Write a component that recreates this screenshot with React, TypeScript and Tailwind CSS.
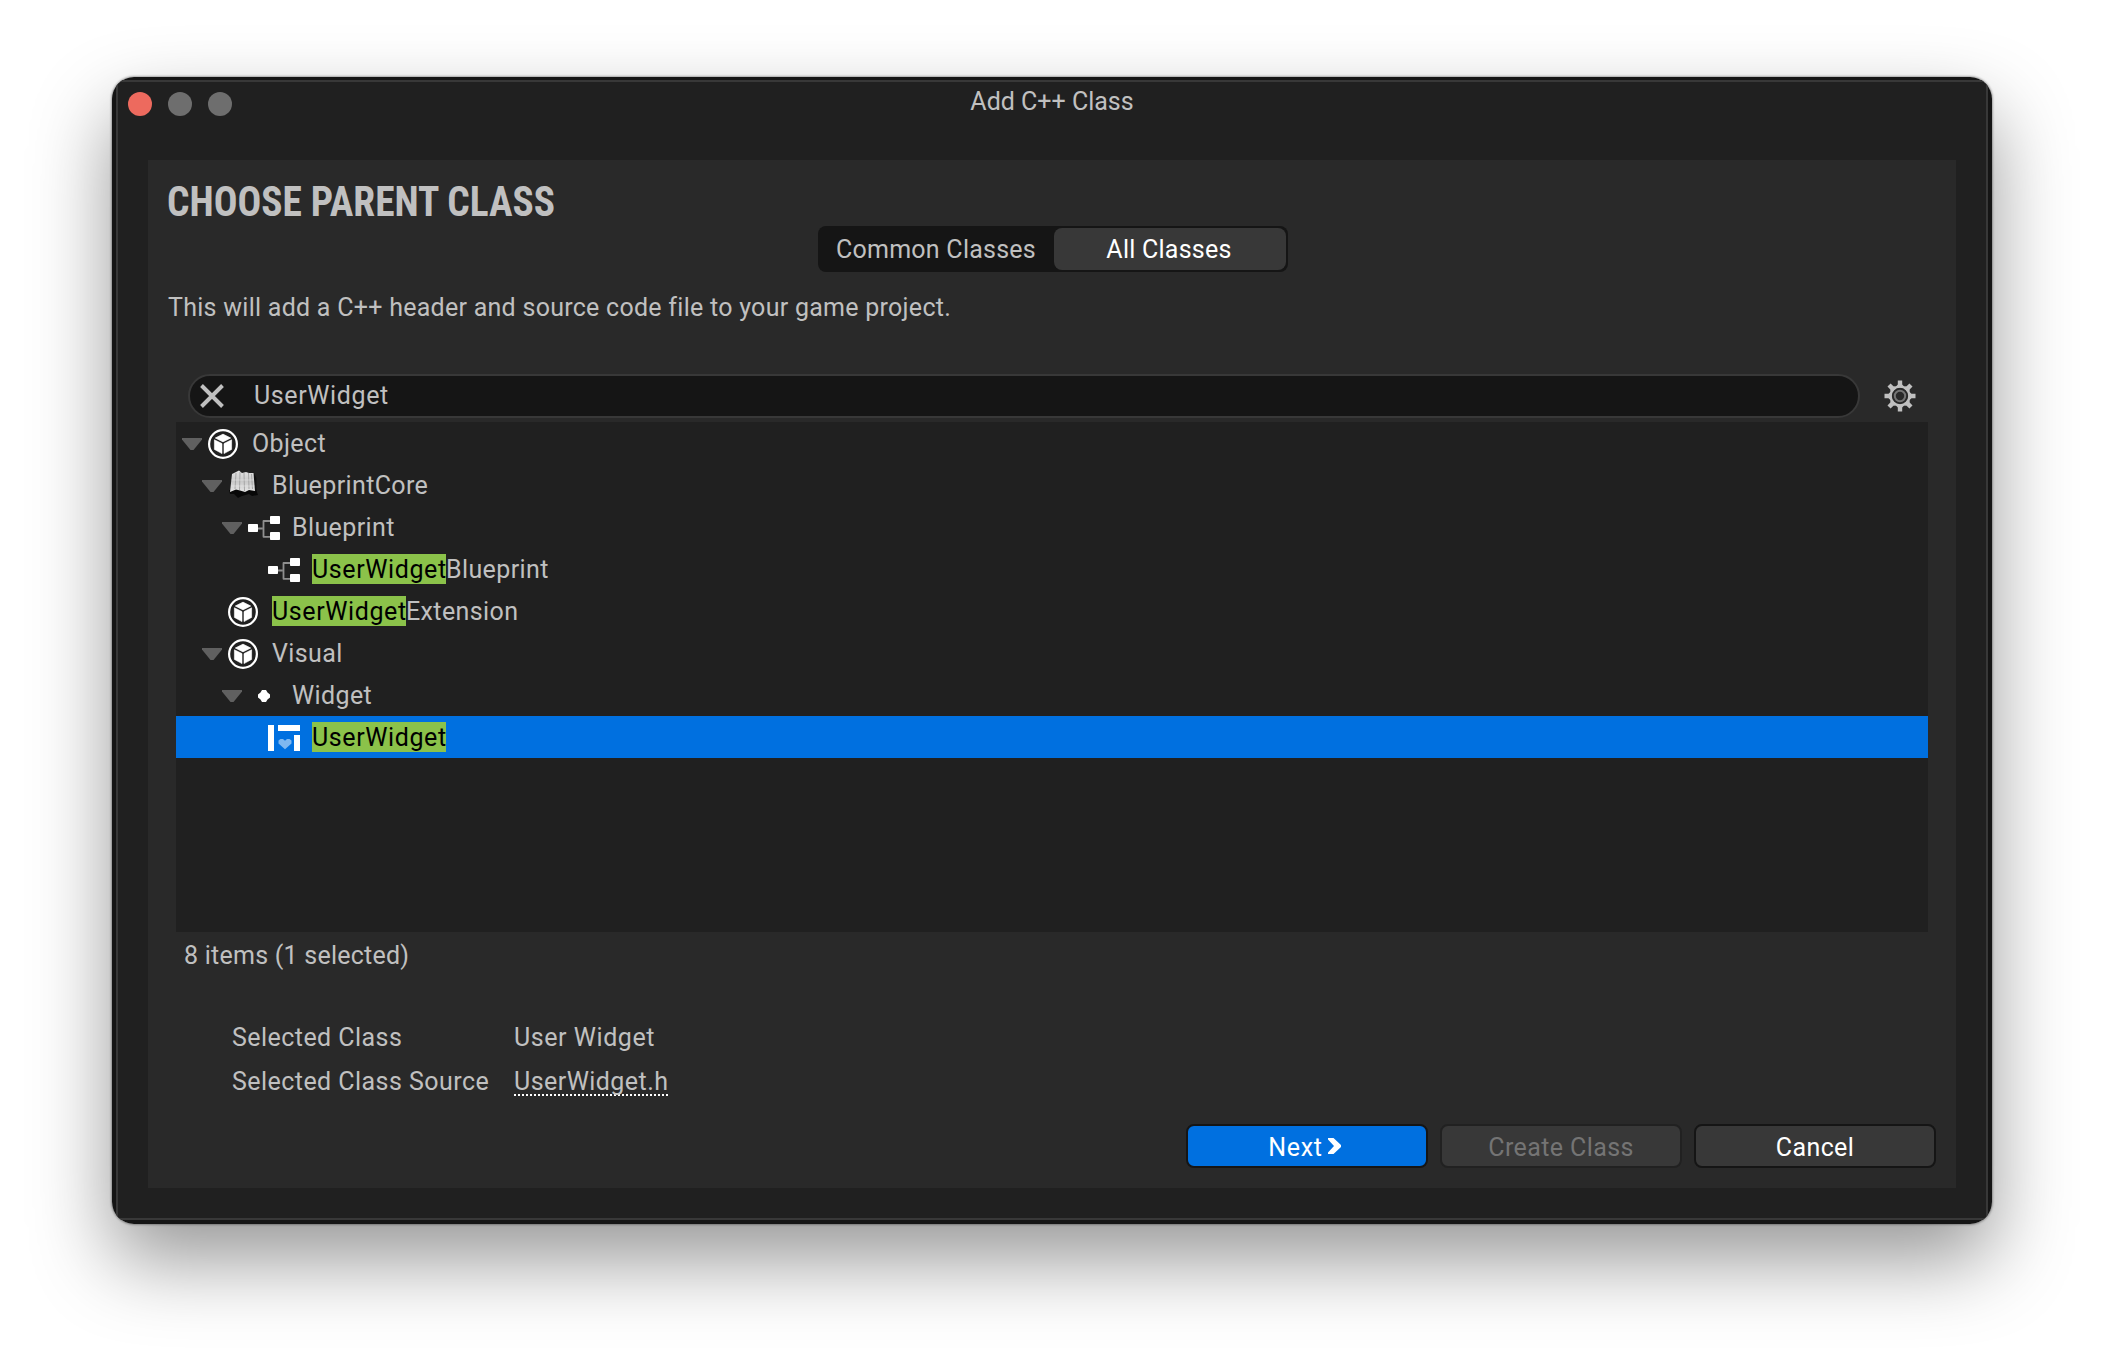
import type { ReactNode } from "react";

function CubeIcon() {
  return (
    <svg width="30" height="30" viewBox="0 0 30 30" fill="none">
      <circle cx="15" cy="15" r="13.9" stroke="#fff" strokeWidth="2.2" />
      <path d="M15 5.2 22.6 9 15 12.8 7.4 9Z" fill="#fff" stroke="#fff" strokeWidth="0.8" strokeLinejoin="round" />
      <path d="M6.4 10.8 14 14.6V24.6L6.4 20.4Z" fill="#fff" stroke="#fff" strokeWidth="0.6" strokeLinejoin="round" />
      <path d="M23.6 10.8 16 14.6V24.6L23.6 20.4Z" fill="#fff" stroke="#fff" strokeWidth="0.6" strokeLinejoin="round" />
    </svg>
  );
}

function CoreIcon() {
  return (
    <svg width="32" height="32" viewBox="0 0 32 32" fill="none">
      <defs>
        <linearGradient id="core" x1="0" y1="0" x2="0" y2="1">
          <stop offset="0" stopColor="#e4e4e4" />
          <stop offset="0.5" stopColor="#c8c8c8" />
          <stop offset="1" stopColor="#e6e6e6" />
        </linearGradient>
      </defs>
      <path d="M1 22 28 21 30 27 24 28 21 26 14 28 10 30 6 26 2 26Z" fill="#080808" />
      <path d="M26 5 28.5 10V23H26Z" fill="#101010" />
      <path d="M4 6 8 4 11 2.500 14 5 18 4 21 5 25.500 5 27 23 21 22 17 24 12 22.500 8 21.500 2 24Z" fill="url(#core)" />
      <path d="M8 5 7 21M12 4 11.500 22M16 5 16.500 23M20.500 5 21 21M23.500 6 24.500 21" stroke="#a2a2a2" strokeWidth="0.9" />
      <path d="M3.500 12H26M3 18H26.500" stroke="#efefef" strokeWidth="0.8" opacity="0.6" />
    </svg>
  );
}

function BlueprintIcon() {
  return (
    <svg width="32" height="24" viewBox="0 0 32 24" fill="none">
      <path d="M10 12.5H14.5M22 5H15.5V20.8H22" stroke="#8f8f8f" strokeWidth="1.8" strokeLinejoin="round" />
      <rect x="0" y="8" width="10" height="8" rx="0.8" fill="#fff" />
      <rect x="22" y="0" width="10" height="8" rx="0.8" fill="#fff" />
      <rect x="22" y="16" width="10" height="8" rx="0.8" fill="#fff" />
    </svg>
  );
}

function DotIcon() {
  return (
    <svg width="32" height="12" viewBox="0 0 32 12">
      <path d="M14 0h4l1.500 2.500L22 4.500v3l-2.500 2L18 12h-4l-1.500-2.500L10 7.500v-3l2.500-2Z" fill="#fff" />
    </svg>
  );
}

function WidgetIcon() {
  return (
    <svg width="32" height="26" viewBox="0 0 32 26">
      <path d="M0 0h6v26H0ZM10 0h22v6H10ZM26 10h6v16h-6Z" fill="#fff" />
      <path d="M17 24.200 10.500 18.500V15.500L12.500 14H15L17 15.800 19 14H21.500L23.500 15.500V18.500Z" fill="#80b8f0" />
    </svg>
  );
}

function GearIcon() {
  return (
    <svg width="32" height="32" viewBox="-16 -16 32 32" fill="none">
      {[0, 45, 90, 135, 180, 225, 270, 315].map((a) => (
        <path key={a} d="M-5 -8.500 -2.200 -11.500V-15.500H2.200V-11.500L5 -8.500Z" fill="#c0c0c0" transform={`rotate(${a})`} />
      ))}
      <circle r="9.200" stroke="#c0c0c0" strokeWidth="2" />
      <circle r="5.200" stroke="#747474" strokeWidth="2" />
    </svg>
  );
}

const indents = ["pl-[6px]", "pl-[26px]", "pl-[46px]", "pl-[66px]"];

type Row = { depth: number; open?: boolean; icon: ReactNode; hit?: string; label: string; selected?: boolean };

const rows: Row[] = [
  { depth: 0, open: true, icon: <CubeIcon />, label: "Object" },
  { depth: 1, open: true, icon: <CoreIcon />, label: "BlueprintCore" },
  { depth: 2, open: true, icon: <BlueprintIcon />, label: "Blueprint" },
  { depth: 3, icon: <BlueprintIcon />, hit: "UserWidget", label: "Blueprint" },
  { depth: 1, icon: <CubeIcon />, hit: "UserWidget", label: "Extension" },
  { depth: 1, open: true, icon: <CubeIcon />, label: "Visual" },
  { depth: 2, open: true, icon: <DotIcon />, label: "Widget" },
  { depth: 3, icon: <WidgetIcon />, hit: "UserWidget", label: "", selected: true },
];

function TreeRow({ row }: { row: Row }) {
  return (
    <div className={`flex h-[42px] items-center ${indents[row.depth]} ${row.selected ? "bg-[#0070e0]" : ""}`}>
      <span className="flex w-[26px] shrink-0 pt-[2px]">
        {row.open && (
          <svg width="20" height="12" viewBox="0 0 20 12">
            <path d="M0 0h20v1.500L11.500 12h-3L0 1.500Z" fill="#606060" />
          </svg>
        )}
      </span>
      <span className={`flex w-[44px] shrink-0 ${row.label === "BlueprintCore" ? "pb-[2px]" : "pt-[1px]"}`}>{row.icon}</span>
      <span className="flex h-[30px] leading-[32px]">
        {row.hit && <mark className="w-[134px] bg-[#8bc24a] tracking-[0.6px] text-black">{row.hit}</mark>}
        <span className="tracking-[0.38px]">{row.label}</span>
      </span>
    </div>
  );
}

const buttonBase = "flex h-[44px] w-[242px] items-center justify-center rounded-[8px] border-2 pt-[3px]";

export default function App() {
  return (
    <div className="h-[1372px] w-[2104px] overflow-hidden bg-white pl-[112px] pt-[77px] font-['Roboto','Liberation_Sans',sans-serif] text-[25px] text-[#c0c0c0]">
      <div className="h-[1147px] w-[1880px] rounded-[22px] shadow-[0_0_2px_1px_rgba(0,0,0,0.3),0_36px_80px_rgba(0,0,0,0.41)]">
        <div className="h-full overflow-hidden rounded-[22px] bg-[#151515] px-1 pb-1 pt-[3px]">
          <div className="h-full border-2 border-[#383838] bg-[#202020] px-[30px]">
            <header className="-mx-[30px] grid h-[78px] grid-cols-3 items-start px-[10px]">
              <div className="flex gap-4 pt-[10px]">
                <span className="size-6 rounded-full bg-[#ed6a5e]" />
                <span className="size-6 rounded-full bg-[#6e6e6e]" />
                <span className="size-6 rounded-full bg-[#6e6e6e]" />
              </div>
              <h1 className="pt-[5px] text-center leading-[29px]">Add C++ Class</h1>
            </header>

            <main className="flex h-[1028px] flex-col bg-[#292929] pt-[22px]">
              <h2 className="ml-[19px] origin-left scale-x-[0.938] font-['Roboto_Condensed','Roboto',sans-serif] text-[42px] font-bold leading-[40px]">
                CHOOSE PARENT CLASS
              </h2>

              <div className="mt-1 flex justify-center pl-[2px]">
                <div className="flex h-[46px] w-[470px] rounded-[8px] bg-[#151515] p-[2px] tracking-[0.25px]">
                  <button className="flex w-[234px] items-center justify-center pr-[2px] pt-[2px]">Common Classes</button>
                  <button className="flex w-[232px] items-center justify-center rounded-[8px] bg-[#383838] pr-[2px] pt-[2px] text-white">
                    All Classes
                  </button>
                </div>
              </div>

              <p className="mt-[21px] pl-5 leading-[29px] tracking-[0.27px]">
                This will add a C++ header and source code file to your game project.
              </p>

              <div className="mt-[52px] flex h-[44px] items-center gap-6 pl-10">
                <div className="flex h-[44px] w-[1672px] items-center rounded-full border-2 border-[#383838] bg-[#151515] pl-[10px]">
                  <svg width="24" height="24" viewBox="0 0 24 24" fill="none">
                    <path d="M1.500 1.500 22.500 22.500M22.500 1.500 1.500 22.500" stroke="#c0c0c0" strokeWidth="3.900" />
                  </svg>
                  <span className="ml-[30px] tracking-[0.62px]">UserWidget</span>
                </div>
                <GearIcon />
              </div>

              <div className="mx-7 mt-1 h-[510px] bg-[#202020]">
                {rows.map((row, i) => (
                  <TreeRow key={i} row={row} />
                ))}
              </div>

              <p className="mt-[9px] pl-[36px] leading-[29px] tracking-[0.24px]">8 items (1 selected)</p>

              <dl className="mt-[53px] grid grid-cols-[282px_1fr] gap-y-[15px] pl-[84px] leading-[29px] tracking-[0.45px]">
                <dt>Selected Class</dt>
                <dd className="tracking-[0.55px]">User Widget</dd>
                <dt>Selected Class Source</dt>
                <dd>
                  <a className="block h-[29px] w-[154px] bg-[repeating-linear-gradient(90deg,#fff_0_2px,transparent_2px_4px)] bg-[length:100%_2px] bg-bottom bg-no-repeat">
                    UserWidget.h
                  </a>
                </dd>
              </dl>

              <footer className="mt-[28px] flex justify-end gap-3 pr-5 tracking-[0.4px]">
                <button className={`${buttonBase} border-[#151515] bg-[#0070e0] pr-[5px] text-white`}>
                  <span className="tracking-[0.7px]">Next</span>
                  <svg className="mb-[3px] ml-[5px]" width="13" height="16" viewBox="0 0 13 16" fill="none">
                    <path d="M0 0H5.500L13 7V9L5.500 16H0V14.500L6 8 0 1.500Z" fill="#fff" />
                  </svg>
                </button>
                <button className={`${buttonBase} border-[#212121] bg-[#383838] text-[#747474]`}>Create Class</button>
                <button className={`${buttonBase} border-[#151515] bg-[#383838] text-white`}>Cancel</button>
              </footer>
            </main>
          </div>
        </div>
      </div>
    </div>
  );
}
